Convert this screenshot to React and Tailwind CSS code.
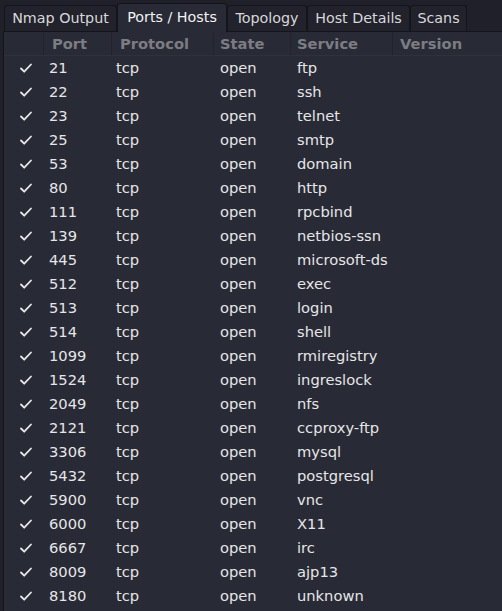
const ports = [
  ["21", "ftp"],
  ["22", "ssh"],
  ["23", "telnet"],
  ["25", "smtp"],
  ["53", "domain"],
  ["80", "http"],
  ["111", "rpcbind"],
  ["139", "netbios-ssn"],
  ["445", "microsoft-ds"],
  ["512", "exec"],
  ["513", "login"],
  ["514", "shell"],
  ["1099", "rmiregistry"],
  ["1524", "ingreslock"],
  ["2049", "nfs"],
  ["2121", "ccproxy-ftp"],
  ["3306", "mysql"],
  ["5432", "postgresql"],
  ["5900", "vnc"],
  ["6000", "X11"],
  ["6667", "irc"],
  ["8009", "ajp13"],
  ["8180", "unknown"],
];

const tabs = [
  { label: "Nmap Output", w: "w-[113px]" },
  { label: "Ports / Hosts", w: "w-[110px]", active: true },
  { label: "Topology", w: "w-[80px]" },
  { label: "Host Details", w: "w-[103px]" },
  { label: "Scans", w: "w-[57px]" },
];

function Check() {
  return (
    <svg width="14" height="14" viewBox="0 0 14 14" fill="none" stroke="#e8e8e8" strokeWidth="1.8" strokeLinecap="round" strokeLinejoin="round">
      <path d="M2 7.5l3.2 3.2L12 3.5" />
    </svg>
  );
}

export default function App() {
  return (
    <div
      className="w-[502px] h-[611px] overflow-hidden bg-[#1f2029] text-[14.7px] text-[#e6e6e6]"
      style={{ fontFamily: '"DejaVu Sans", sans-serif' }}
    >
      {/* Tabs */}
      <div className="flex items-end h-[31px] pl-[4px] text-[14.3px]">
        {tabs.map((t) => (
          <div
            key={t.label}
            className={
              t.active
                ? `${t.w} shrink-0 h-[29px] flex items-center justify-center whitespace-nowrap border border-b-0 border-[#14151b] rounded-t-[3px] bg-[#282a36] text-[#f2f2f2] -mb-px relative z-10`
                : `${t.w} shrink-0 h-[26px] flex items-center justify-center whitespace-nowrap border border-b-0 border-[#14151b] rounded-t-[3px] bg-[#21222c] text-[#d8d8d8]`
            }
          >
            {t.label}
          </div>
        ))}
      </div>

      {/* Table */}
      <div className="ml-[3px] border-l border-t border-[#14151b] bg-[#282a36] h-[580px]">
        <div className="flex h-[24px] items-center font-bold text-[#7c7d82] border-b border-[#2f313d]">
          <div className="w-[40px] h-full border-r border-[#22232d]" />
          <div className="w-[68px] h-full pl-[8px] pt-px flex items-center border-r border-[#22232d]">Port</div>
          <div className="w-[102px] h-full pl-[8px] pt-px flex items-center border-r border-[#22232d]">Protocol</div>
          <div className="w-[77px] h-full pl-[6px] pt-px flex items-center border-r border-[#22232d]">State</div>
          <div className="w-[102px] h-full pl-[6px] pt-px flex items-center border-r border-[#22232d]">Service</div>
          <div className="flex-1 h-full pl-[7px] pt-px flex items-center">Version</div>
        </div>
        {ports.map(([p, s]) => (
          <div key={p} className="flex h-[24px] items-center">
            <div className="w-[40px] flex justify-center pl-[4px]">
              <Check />
            </div>
            <div className="w-[68px] pl-[5px]">{p}</div>
            <div className="w-[102px] pl-[4px]">tcp</div>
            <div className="w-[77px] pl-[6px]">open</div>
            <div className="w-[102px] pl-[6px]">{s}</div>
            <div className="flex-1" />
          </div>
        ))}
      </div>
    </div>
  );
}
